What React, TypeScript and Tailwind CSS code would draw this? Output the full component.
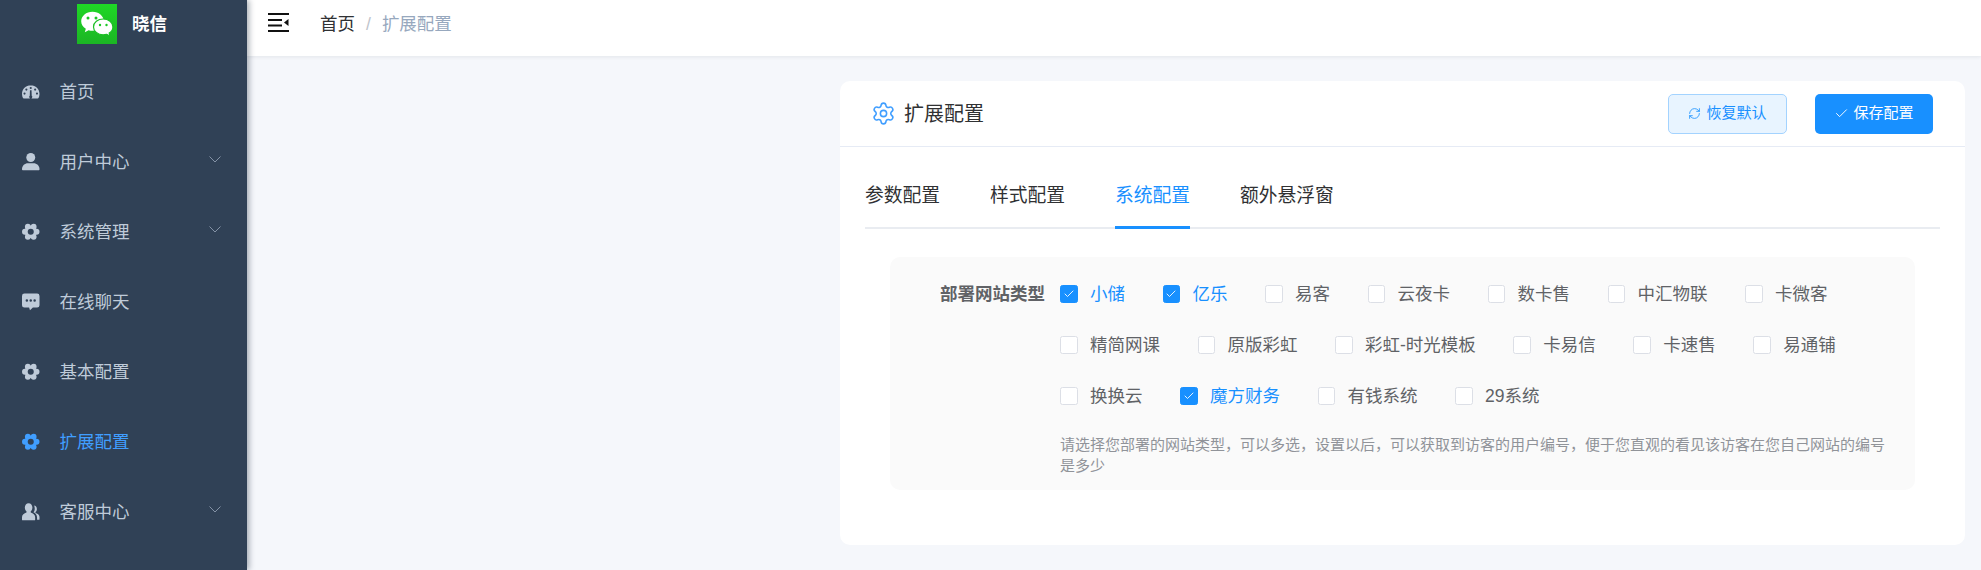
import { Check, RefreshCw, Settings } from "lucide-react";

const GaugeIcon = () => (
  <svg viewBox="0 0 18 18" className="w-[17.5px] h-[17.5px]" fill="currentColor">
    <path
      fillRule="evenodd"
      d="M9 2.2C4 2.2 0 6.2 0 11.2c0 1.6.4 3 1 4.3.2.3.5.4.8.4h14.4c.3 0 .6-.1.8-.4.6-1.3 1-2.7 1-4.3 0-5-4-9-9-9ZM9 4a1.1 1.1 0 1 1 0 2.2A1.1 1.1 0 0 1 9 4ZM4.5 5.7a1.1 1.1 0 1 1 0 2.2 1.1 1.1 0 0 1 0-2.2Zm9 0a1.1 1.1 0 1 1 0 2.2 1.1 1.1 0 0 1 0-2.2ZM2.6 9.8a1.1 1.1 0 1 1 0 2.2 1.1 1.1 0 0 1 0-2.2Zm12.8 0a1.1 1.1 0 1 1 0 2.2 1.1 1.1 0 0 1 0-2.2ZM8.2 7.5h1.6l.2 5.6a1.6 1.6 0 1 1-2 0l.2-5.6Z"
    />
  </svg>
);

const UserIcon = () => (
  <svg viewBox="0 0 18 18" className="w-[17.5px] h-[17.5px]" fill="currentColor">
    <circle cx="9" cy="4.6" r="4.6" />
    <path d="M0 16.6c0-3.6 3-6 6-6h6c3 0 6 2.4 6 6 0 .7-.5 1.2-1.2 1.2H1.2C.5 17.8 0 17.3 0 16.6Z" />
  </svg>
);

// six lobes around a ring, the hole takes the sidebar colour
const GearIcon = () => (
  <svg viewBox="0 0 18 18" className="w-[17.5px] h-[17.5px]" fill="currentColor">
    <circle cx="9" cy="9" r="6.400" />
    <circle cx="15" cy="9" r="3" />
    <circle cx="12" cy="3.800" r="3" />
    <circle cx="6" cy="3.800" r="3" />
    <circle cx="3" cy="9" r="3" />
    <circle cx="6" cy="14.200" r="3" />
    <circle cx="12" cy="14.200" r="3" />
    <circle cx="9" cy="9" r="3.100" fill="#304156" />
  </svg>
);

const ChatIcon = () => (
  <svg viewBox="0 0 18 18" className="w-[17.5px] h-[17.5px]" fill="currentColor">
    <path
      fillRule="evenodd"
      d="M2.5.5h13A2.5 2.5 0 0 1 18 3v9.5a2.5 2.5 0 0 1-2.5 2.5h-4.3l-3 2.8-.9-2.8H2.5A2.5 2.5 0 0 1 0 12.500V3A2.500 2.500 0 0 1 2.500.5ZM5 6.500a1.300 1.300 0 1 0 0 2.600 1.300 1.300 0 0 0 0-2.600Zm4 0a1.300 1.300 0 1 0 0 2.600 1.300 1.300 0 0 0 0-2.600Zm4 0a1.300 1.300 0 1 0 0 2.600 1.300 1.300 0 0 0 0-2.600Z"
    />
  </svg>
);

const PeopleIcon = () => (
  <svg viewBox="0 0 18 18" className="w-[17.5px] h-[17.5px]" fill="currentColor">
    <path d="M6.800.2c2.300 0 3.900 2 3.900 4.400 0 1.700-.7 3.100-1.700 3.900v1.200c2.400.8 4.500 2.300 4.500 4.900v2.600c0 .3-.2.6-.6.600H.6c-.3 0-.6-.3-.6-.6v-2.600c0-2.600 2.200-4.100 4.600-4.900V8.500C3.600 7.700 2.900 6.300 2.900 4.600 2.900 2.200 4.500.2 6.800.2Z" />
    <path d="M12.300 2.600c1.800 0 3 1.600 3 3.500 0 1.300-.5 2.500-1.400 3.200v1c1.900.6 4.100 1.800 4.100 3.800v2.500c0 .4-.2.600-.6.600h-1.900v-2.400c0-2.500-1.700-4.200-3.700-5.200.9-1 1.300-2.400 1.300-4 0-1.100-.2-2-.6-2.900.2-.1.500-.1.800-.1Z" />
  </svg>
);

const Chevron = () => (
  <svg viewBox="0 0 12 7" className="w-3 h-[7px] ml-auto mr-[26px] -mt-[5px]" fill="none" stroke="#8492a6" strokeWidth="1">
    <polyline points="0.5,0.5 6,6 11.500,0.5" />
  </svg>
);

const WeChatLogo = () => (
  <svg viewBox="0 0 40 40" className="w-10 h-10">
    <defs>
      <linearGradient id="wechat-bg" x1="0" y1="0" x2="0" y2="1">
        <stop offset="0" stopColor="#1fd726" />
        <stop offset="1" stopColor="#1bb524" />
      </linearGradient>
    </defs>
    <rect width="40" height="40" fill="url(#wechat-bg)" />
    <path d="M15.500 7.800c6.300 0 11.300 4.200 11.300 9.500s-5 9.500-11.300 9.500c-1.400 0-2.700-.2-3.900-.6l-3.800 2 1-3.400C5.900 23.100 4.200 20.400 4.200 17.300c0-5.300 5-9.500 11.300-9.500Z" fill="#fff" />
    <path d="M26.200 15c5.400 0 9.700 3.500 9.700 7.900 0 2.500-1.500 4.800-3.700 6.200l.8 3-3.300-1.800c-1.100.3-2.300.5-3.500.5-5.400 0-9.700-3.500-9.700-7.900S20.800 15 26.200 15Z" fill="#fff" stroke="#1cbf25" strokeWidth="1.200" />
    <circle cx="11" cy="14" r="1.500" fill="#1cc725" />
    <circle cx="19" cy="14" r="1.500" fill="#1cc725" />
    <circle cx="23" cy="21" r="1.200" fill="#1cc725" />
    <circle cx="29.500" cy="21" r="1.200" fill="#1cc725" />
  </svg>
);

const HamburgerIcon = () => (
  <svg viewBox="0 0 21 19" className="w-[21px] h-[19px]" fill="#111">
    <rect x="0" y="0" width="21" height="2" />
    <rect x="0" y="6" width="14" height="2" />
    <rect x="0" y="11.500" width="14" height="2" />
    <rect x="0" y="17" width="21" height="2" />
    <polygon points="16,9.500 20.500,6 20.500,13" />
  </svg>
);

const menu = [
  { label: "首页", icon: GaugeIcon },
  { label: "用户中心", icon: UserIcon, sub: true },
  { label: "系统管理", icon: GearIcon, sub: true },
  { label: "在线聊天", icon: ChatIcon },
  { label: "基本配置", icon: GearIcon },
  { label: "扩展配置", icon: GearIcon, active: true },
  { label: "客服中心", icon: PeopleIcon, sub: true },
];

const tabs = [
  { label: "参数配置" },
  { label: "样式配置" },
  { label: "系统配置", active: true },
  { label: "额外悬浮窗" },
];

const siteTypes = [
  { label: "小储", checked: true },
  { label: "亿乐", checked: true },
  { label: "易客" },
  { label: "云夜卡" },
  { label: "数卡售" },
  { label: "中汇物联" },
  { label: "卡微客" },
  { label: "精简网课" },
  { label: "原版彩虹" },
  { label: "彩虹-时光模板" },
  { label: "卡易信" },
  { label: "卡速售" },
  { label: "易通铺" },
  { label: "换换云" },
  { label: "魔方财务", checked: true },
  { label: "有钱系统" },
  { label: "29系统" },
];

export default function App() {
  return (
    <div
      className="flex h-screen overflow-hidden bg-[#f5f7fb] text-[17.5px]"
      style={{ fontFamily: '"Liberation Sans", "Noto Sans CJK SC", sans-serif' }}
    >
      {/* Sidebar */}
      <aside className="relative z-10 w-[247px] shrink-0 bg-[#304156] shadow-[2px_0_6px_rgba(0,21,41,0.35)]">
        <div className="flex items-start h-[57px] pt-1 pl-[77px]">
          <WeChatLogo />
          <span className="ml-[15px] h-10 leading-10 font-bold text-white">晓信</span>
        </div>
        <nav>
          {menu.map((item) => (
            <div
              key={item.label}
              className={`flex items-center h-[70px] pl-[22px] ${item.active ? "text-[#409eff]" : "text-[#bfcbd9]"}`}
            >
              <item.icon />
              <span className="ml-5">{item.label}</span>
              {item.sub && <Chevron />}
            </div>
          ))}
        </nav>
      </aside>

      <div className="flex-1 flex flex-col min-w-0">
        {/* Top bar */}
        <header className="flex items-start h-14 pl-[21px] pt-[13px] bg-white shadow-[0_1px_4px_rgba(0,21,41,0.08)]">
          <HamburgerIcon />
          <div className="flex items-center h-[22px] ml-[31px]">
            <span className="text-[#303133]">首页</span>
            <span className="mx-[11px] text-[#c0c4cc]">/</span>
            <span className="text-[#97a8be]">扩展配置</span>
          </div>
        </header>

        {/* Content */}
        <main className="flex-1 flex justify-end items-start pt-[25px] pr-4">
          <div className="w-[1125px] h-[464px] bg-white rounded-[10px]">
            <div className="flex items-center h-[66px] pl-[31px] pr-8 border-b border-[#e6ebf5]">
              <Settings size={25} strokeWidth={1.5} className="text-[#409eff]" />
              <span className="ml-2 text-[20px] text-[#303133]">扩展配置</span>
              <button className="flex items-center justify-center ml-auto w-[119px] h-10 rounded-[5px] border border-[#a3d3ff] bg-[#e8f4ff] text-[15px] text-[#1890ff]">
                <RefreshCw size={13} strokeWidth={1.5} className="mr-[5px]" />
                恢复默认
              </button>
              <button className="flex items-center justify-center ml-7 w-[118px] h-10 rounded-[5px] bg-[#1890ff] text-[15px] text-white">
                <Check size={15} strokeWidth={1.5} className="mr-1" />
                保存配置
              </button>
            </div>

            <div className="px-[25px]">
              <div className="flex gap-[50px] h-[82px] border-b-[2.5px] border-[#e9ecf1]">
                {tabs.map((tab) => (
                  <div
                    key={tab.label}
                    className={`h-[82px] pt-[34px] leading-[30px] text-[18.75px] ${
                      tab.active ? "text-[#1890ff] border-b-[3px] border-[#1890ff]" : "text-[#303133]"
                    }`}
                  >
                    {tab.label}
                  </div>
                ))}
              </div>

              <div className="flex mt-[28px] mx-[25px] pt-[11.5px] pb-[14.5px] pl-[50px] pr-5 rounded-[10px] bg-[#fafafa]">
                <div className="shrink-0 w-[120px] h-[51px] leading-[51px] font-bold text-[#606266]">部署网站类型</div>
                <div className="flex-1 min-w-0">
                  <div className="flex flex-wrap">
                    {siteTypes.map((site) => (
                      <label key={site.label} className="flex items-center h-[51px] mr-[37.5px]">
                        <span
                          className={`flex items-center justify-center w-[17.5px] h-[17.5px] rounded-[2.5px] border ${
                            site.checked ? "border-[#1890ff] bg-[#1890ff]" : "border-[#dcdfe6] bg-white"
                          }`}
                        >
                          {site.checked && <Check size={12} strokeWidth={1.75} className="text-white" />}
                        </span>
                        <span className={`pl-[12.5px] ${site.checked ? "text-[#1890ff]" : "text-[#606266]"}`}>{site.label}</span>
                      </label>
                    ))}
                  </div>
                  <p className="mt-3 text-[15px] leading-[21px] text-[#909399]">
                    请选择您部署的网站类型，可以多选，设置以后，可以获取到访客的用户编号，便于您直观的看见该访客在您自己网站的编号是多少
                  </p>
                </div>
              </div>
            </div>
          </div>
        </main>
      </div>
    </div>
  );
}
